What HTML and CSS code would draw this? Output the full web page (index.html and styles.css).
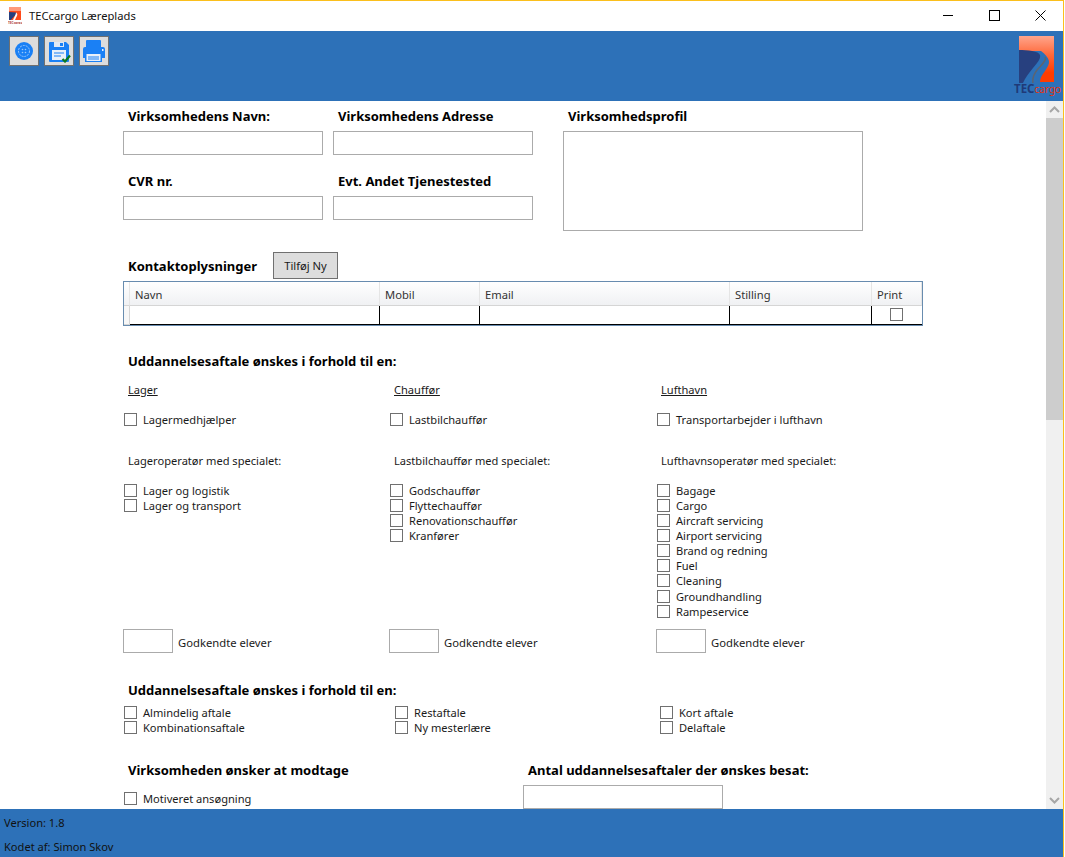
FILE: index.html
```html
<!DOCTYPE html>
<html lang="da">
<head>
  <meta charset="UTF-8" />
  <title>TECcargo Læreplads</title>
  <meta name="viewport" content="width=device-width, initial-scale=1.0"/>
  <link rel="stylesheet" href="styles.css">
</head>
<body>
  <div class="window">
    <header class="titlebar">
      <svg class="app-icon" viewBox="0 0 14 17" width="14" height="17">
        <rect x="1" y="0" width="12" height="13" fill="#ff4a1a"/>
        <rect x="1" y="0" width="12" height="4" fill="#ff9a7a"/>
        <path d="M1 5 L8 5.5 C8.5 8 5 10 3 13 H1 Z" fill="#27407f"/>
        <path d="M8 5.5 C11 7 8 10 7 13 H5 C6 10 8 8 8 5.5 Z" fill="#ffffff"/>
        <text x="0" y="16.5" class="app-icon-text">TECcargo</text>
      </svg>
      <span class="app-title">TECcargo Læreplads</span>
      <div class="win-buttons">
        <button class="win-btn"><svg width="10" height="10" viewBox="0 0 10 10"><path d="M0 5.5H10" stroke="#000"/></svg></button>
        <button class="win-btn"><svg width="11" height="11" viewBox="0 0 11 11"><rect x="0.5" y="0.5" width="10" height="10" fill="none" stroke="#000"/></svg></button>
        <button class="win-btn"><svg width="11" height="11" viewBox="0 0 11 11"><path d="M0.5 0.5L10.5 10.5M10.5 0.5L0.5 10.5" stroke="#000"/></svg></button>
      </div>
    </header>

    <div class="toolbar">
      <div class="tools">
        <button class="tool">
          <svg width="18" height="18" viewBox="0 0 18 18">
            <circle cx="9" cy="9" r="9" fill="#1a80f5"/>
            <circle cx="9" cy="9" r="5.5" fill="none" stroke="#9cc8fa" stroke-width="1" stroke-dasharray="2 1"/>
            <circle cx="7.5" cy="7.5" r="0.8" fill="#9cc8fa"/>
            <circle cx="10.5" cy="7.5" r="0.8" fill="#9cc8fa"/>
            <circle cx="7.5" cy="10.5" r="0.8" fill="#9cc8fa"/>
            <circle cx="10.5" cy="10.5" r="0.8" fill="#9cc8fa"/>
          </svg>
        </button>
        <button class="tool">
          <svg width="24" height="24" viewBox="0 0 24 24">
            <path d="M2 4 a1 1 0 0 1 1-1 H19 L22 6 V22 a1 1 0 0 1-1 1 H3 a1 1 0 0 1-1-1 Z" fill="#1a80f5"/>
            <rect x="7" y="3" width="10" height="5" fill="#dfe9f5"/>
            <rect x="13" y="4" width="3" height="3" fill="#1a80f5"/>
            <rect x="5" y="11" width="14" height="10" fill="#e8f0fa"/>
            <path d="M7 14H17M7 17H14" stroke="#1a80f5"/>
            <path d="M15.5 20L18 22.5L23 16.5" fill="none" stroke="#0b7a1e" stroke-width="2.2"/>
          </svg>
        </button>
        <button class="tool">
          <svg width="26" height="24" viewBox="0 0 26 24">
            <path d="M5 8V2 a1 1 0 0 1 1-1 H19 a1 1 0 0 1 1 1 V8 Z" fill="#1a80f5"/>
            <path d="M2 10 a2 2 0 0 1 2-2 H22 a2 2 0 0 1 2 2 V19 H20 V14 H5 V19 H2 Z" fill="#1a80f5"/>
            <rect x="4" y="14" width="17" height="9" fill="#1a80f5"/>
            <rect x="5.5" y="15" width="14" height="7" fill="#e8f0fa"/>
            <path d="M7 18H18M7 20H18" stroke="#1a80f5"/>
            <rect x="21" y="10" width="1.5" height="2" fill="#e8f0fa"/>
          </svg>
        </button>
      </div>
      <div class="logo">
        <svg class="logo-mark" width="35" height="47" viewBox="0 0 35 47">
          <defs>
            <linearGradient id="logoRed" x1="0" y1="0" x2="0" y2="1">
              <stop offset="0" stop-color="#ffa58c"/>
              <stop offset="0.4" stop-color="#ff6a3c"/>
              <stop offset="0.8" stop-color="#ff3c00"/>
            </linearGradient>
          </defs>
          <path d="M0 0H35V46H21 C21 38 31 32 30 25 C29 21 26 18 22 15 L0 15 Z" fill="url(#logoRed)"/>
          <path d="M0 14 C8 14 20 15 21 19 C22 23 18 27 14 32 C10 37 6 42 4 47 H0 Z" fill="#27407f"/>
          <path d="M26 21 C28 25 22 29 18 34 C15 38 13 42 14 47" fill="none" stroke="#5d6470" stroke-width="1.5"/>
        </svg>
        <div class="logo-text"><span class="logo-tec">TEC</span><span class="logo-cargo">cargo</span></div>
      </div>
    </div>

    <div class="main">
      <form class="content">
        <div class="top-fields">
          <div class="top-grid">
            <div class="field"><label class="bold-label">Virksomhedens Navn:</label><input class="text-input" type="text"></div>
            <div class="field"><label class="bold-label">Virksomhedens Adresse</label><input class="text-input" type="text"></div>
            <div class="field"><label class="bold-label">CVR nr.</label><input class="text-input" type="text"></div>
            <div class="field"><label class="bold-label">Evt. Andet Tjenestested</label><input class="text-input" type="text"></div>
          </div>
          <div class="field profile"><label class="bold-label">Virksomhedsprofil</label><textarea class="text-area"></textarea></div>
        </div>

        <div class="contact-head">
          <span class="bold-label">Kontaktoplysninger</span>
          <button type="button" class="add-btn">Tilføj Ny</button>
        </div>
        <div class="grid-wrap">
          <table class="contacts">
            <colgroup>
              <col class="c-head"><col class="c-name"><col class="c-mobile"><col class="c-email"><col class="c-job"><col class="c-print">
            </colgroup>
            <thead>
              <tr><th></th><th>Navn</th><th>Mobil</th><th>Email</th><th>Stilling</th><th>Print</th></tr>
            </thead>
            <tbody>
              <tr>
                <td class="row-head"></td><td></td><td></td><td></td><td></td>
                <td class="print-cell"><input class="check" type="checkbox"></td>
              </tr>
            </tbody>
          </table>
        </div>

        <h2 class="bold-label section-title">Uddannelsesaftale ønskes i forhold til en:</h2>

        <div class="columns">
          <section class="col">
            <div class="col-title">Lager</div>
            <label class="check-row first"><input class="check" type="checkbox">Lagermedhjælper</label>
            <div class="sub-title">Lageroperatør med specialet:</div>
            <div class="check-list">
              <label class="check-row"><input class="check" type="checkbox">Lager og logistik</label>
              <label class="check-row"><input class="check" type="checkbox">Lager og transport</label>
            </div>
            <div class="approved"><input class="small-input" type="text"><span class="approved-text">Godkendte elever</span></div>
          </section>
          <section class="col">
            <div class="col-title">Chauffør</div>
            <label class="check-row first"><input class="check" type="checkbox">Lastbilchauffør</label>
            <div class="sub-title">Lastbilchauffør med specialet:</div>
            <div class="check-list">
              <label class="check-row"><input class="check" type="checkbox">Godschauffør</label>
              <label class="check-row"><input class="check" type="checkbox">Flyttechauffør</label>
              <label class="check-row"><input class="check" type="checkbox">Renovationschauffør</label>
              <label class="check-row"><input class="check" type="checkbox">Kranfører</label>
            </div>
            <div class="approved"><input class="small-input" type="text"><span class="approved-text">Godkendte elever</span></div>
          </section>
          <section class="col">
            <div class="col-title">Lufthavn</div>
            <label class="check-row first"><input class="check" type="checkbox">Transportarbejder i lufthavn</label>
            <div class="sub-title">Lufthavnsoperatør med specialet:</div>
            <div class="check-list">
              <label class="check-row"><input class="check" type="checkbox">Bagage</label>
              <label class="check-row"><input class="check" type="checkbox">Cargo</label>
              <label class="check-row"><input class="check" type="checkbox">Aircraft servicing</label>
              <label class="check-row"><input class="check" type="checkbox">Airport servicing</label>
              <label class="check-row"><input class="check" type="checkbox">Brand og redning</label>
              <label class="check-row"><input class="check" type="checkbox">Fuel</label>
              <label class="check-row"><input class="check" type="checkbox">Cleaning</label>
              <label class="check-row nudge"><input class="check" type="checkbox">Groundhandling</label>
              <label class="check-row"><input class="check" type="checkbox">Rampeservice</label>
            </div>
            <div class="approved"><input class="small-input" type="text"><span class="approved-text">Godkendte elever</span></div>
          </section>
        </div>

        <h2 class="bold-label section-title second">Uddannelsesaftale ønskes i forhold til en:</h2>
        <div class="agreements">
          <div>
            <label class="check-row"><input class="check" type="checkbox">Almindelig aftale</label>
            <label class="check-row"><input class="check" type="checkbox">Kombinationsaftale</label>
          </div>
          <div>
            <label class="check-row"><input class="check" type="checkbox">Restaftale</label>
            <label class="check-row"><input class="check" type="checkbox">Ny mesterlære</label>
          </div>
          <div>
            <label class="check-row"><input class="check" type="checkbox">Kort aftale</label>
            <label class="check-row"><input class="check" type="checkbox">Delaftale</label>
          </div>
        </div>

        <div class="receive">
          <div class="receive-left">
            <div class="bold-label">Virksomheden ønsker at modtage</div>
            <label class="check-row motivated"><input class="check" type="checkbox">Motiveret ansøgning</label>
          </div>
          <div class="field">
            <label class="bold-label">Antal uddannelsesaftaler der ønskes besat:</label>
            <input class="text-input count" type="text">
          </div>
        </div>
      </form>

      <div class="scrollbar">
        <div class="scroll-btn"><svg width="11" height="7" viewBox="0 0 11 7"><path d="M1 6L5.5 1.5L10 6" fill="none" stroke="#a6a6a6" stroke-width="2"/></svg></div>
        <div class="scroll-thumb"></div>
        <div class="scroll-btn end"><svg width="11" height="7" viewBox="0 0 11 7"><path d="M1 1L5.5 5.5L10 1" fill="none" stroke="#a6a6a6" stroke-width="2"/></svg></div>
      </div>
    </div>

    <footer class="statusbar">
      <div class="status-line">Version: 1.8</div>
      <div class="status-line">Kodet af: Simon Skov</div>
    </footer>
  </div>
</body>
</html>
```

FILE: styles.css
```css
* {
  box-sizing: border-box;
}
body {
  margin: 0;
  overflow: hidden;
  font-family: "Noto Sans", Arial, sans-serif;
  font-size: 11.1px;
  color: #1a1a1a;
  background: white;
}
.window {
  display: flex;
  flex-direction: column;
  width: 1064px;
  height: 857px;
  border-top: 1px solid #fbbf1c;
  border-right: 1px solid #fbbf1c;
  overflow: hidden;
}

/* Titlebar */
.titlebar {
  display: flex;
  align-items: center;
  height: 30px;
  flex: none;
  padding: 0 0 2px 8px;
  background: white;
}
.app-icon {
  margin-right: 7px;
}
.app-icon-text {
  font-size: 3.2px;
  font-weight: bold;
  fill: #b03a3a;
}
.app-title {
  font-size: 11.2px;
  color: #111;
}
.win-buttons {
  display: flex;
  margin-left: auto;
}
.win-btn {
  display: flex;
  align-items: center;
  justify-content: center;
  width: 46px;
  height: 28px;
  padding: 0;
  border: none;
  background: none;
}

/* Toolbar */
.toolbar {
  display: flex;
  justify-content: space-between;
  flex: none;
  height: 70px;
  padding: 5px 0 0 9px;
  background: #2d71b8;
}
.tools {
  display: flex;
  gap: 5px;
  align-items: flex-start;
}
.tool {
  display: flex;
  align-items: center;
  justify-content: center;
  width: 30px;
  height: 30px;
  padding: 0;
  border: 1px solid #707070;
  background: #dddddd;
}
.logo {
  width: 49px;
}
.logo-mark {
  display: block;
  margin-left: 5px;
}
.logo-text {
  font-size: 11.5px;
  line-height: 12px;
  font-weight: bold;
  white-space: nowrap;
}
.logo-tec {
  color: #1f3a78;
}
.logo-cargo {
  color: #e8340c;
  font-size: 10px;
  font-weight: normal;
}

/* Main area */
.main {
  display: flex;
  flex: 1;
  min-height: 0;
}
.content {
  flex: 1;
  padding: 5px 0 0 123px;
  overflow: hidden;
  background: white;
}
.bold-label {
  display: block;
  height: 20px;
  margin: 0 0 0 5px;
  font-size: 13px;
  font-weight: bold;
  line-height: 20px;
  color: #000;
  white-space: nowrap;
}
.text-input {
  display: block;
  width: 200px;
  height: 24px;
  margin-top: 5px;
  border: 1px solid #ababab;
  background: white;
}
.text-area {
  display: block;
  width: 300px;
  height: 100px;
  margin-top: 5px;
  border: 1px solid #ababab;
  resize: none;
}
.top-fields {
  display: flex;
}
.top-grid {
  display: grid;
  grid-template-columns: 200px 200px;
  gap: 16px 10px;
  align-content: start;
}
.profile {
  margin-left: 30px;
}

/* Contacts */
.contact-head {
  display: flex;
  align-items: center;
  height: 27px;
  margin-top: 21px;
}
.contact-head .bold-label {
  width: 145px;
}
.add-btn {
  width: 65px;
  height: 27px;
  padding: 0;
  border: 1px solid #707070;
  background: #dddddd;
  font-family: inherit;
  font-size: 11.2px;
  color: #1a1a1a;
}
.grid-wrap {
  width: 800px;
  height: 45px;
  margin-top: 2px;
  border: 1px solid #688caf;
  background: white;
}
.contacts {
  width: 798px;
  border-collapse: separate;
  border-spacing: 0;
  table-layout: fixed;
}
.c-head { width: 6px; }
.c-name { width: 250px; }
.c-mobile { width: 100px; }
.c-email { width: 250px; }
.c-job { width: 142px; }
.c-print { width: 50px; }
.contacts th {
  height: 24px;
  padding: 1px 0 0 5px;
  border-right: 1px solid #e5e5e5;
  border-bottom: 1px solid #d5d5d5;
  background: linear-gradient(#ffffff, #f0f1f3);
  font-size: 11.2px;
  font-weight: normal;
  text-align: left;
  color: #333;
}
.contacts td {
  height: 19px;
  padding: 0;
  border-right: 1px solid #000;
  border-bottom: 1px solid #000;
}
.contacts .row-head {
  border-right: 1px solid #d5d5d5;
  border-bottom: 1px solid #d5d5d5;
  background: #f7f7f7;
}
.contacts .print-cell {
  padding-right: 2px;
  border-right: none;
  text-align: center;
}
.print-cell .check {
  margin: 0;
  vertical-align: top;
}

.section-title {
  margin-top: 25px;
}
.section-title.second {
  margin-top: 27px;
}

/* Three columns */
.columns {
  display: grid;
  grid-template-columns: 266px 267px 266px;
  width: 799px;
  margin-top: 9px;
}
.col {
  display: flex;
  flex-direction: column;
}
.col-title {
  height: 20px;
  margin-left: 5px;
  line-height: 20px;
  text-decoration: underline;
}
.sub-title {
  height: 20px;
  margin: 24px 0 12px 5px;
  line-height: 20px;
}
.check-row {
  display: flex;
  align-items: center;
  height: 15px;
  padding-left: 1px;
  white-space: nowrap;
}
.check-row.first {
  margin-top: 12px;
}
.check-row.nudge {
  margin-top: 1px;
}
.check {
  appearance: none;
  flex: none;
  width: 13px;
  height: 13px;
  margin: 0 6px 0 0;
  border: 1px solid #707070;
  background: white;
}
.approved {
  display: flex;
  align-items: center;
  gap: 5px;
  margin-top: auto;
  padding-top: 10px;
}
.approved-text {
  padding-top: 2px;
  font-size: 11.25px;
}
.small-input {
  width: 50px;
  height: 24px;
  border: 1px solid #ababab;
}

/* Agreements */
.agreements {
  display: grid;
  grid-template-columns: 271px 265px 265px;
  margin-top: 5px;
}
.receive {
  display: flex;
  margin-top: 25px;
}
.receive-left {
  width: 400px;
}
.motivated {
  margin-top: 11px;
}
.count {
  margin-top: 5px;
}

/* Scrollbar */
.scrollbar {
  display: flex;
  flex-direction: column;
  flex: none;
  width: 17px;
  background: #f0f0f0;
}
.scroll-btn {
  display: flex;
  align-items: center;
  justify-content: center;
  height: 17px;
}
.scroll-btn.end {
  margin-top: auto;
}
.scroll-thumb {
  height: 302px;
  background: #cdcdcd;
}

/* Status */
.statusbar {
  flex: none;
  height: 48px;
  padding-top: 2px;
  background: #2d71b8;
}
.status-line {
  height: 24px;
  padding-left: 4px;
  line-height: 24px;
  color: #111;
}
```
